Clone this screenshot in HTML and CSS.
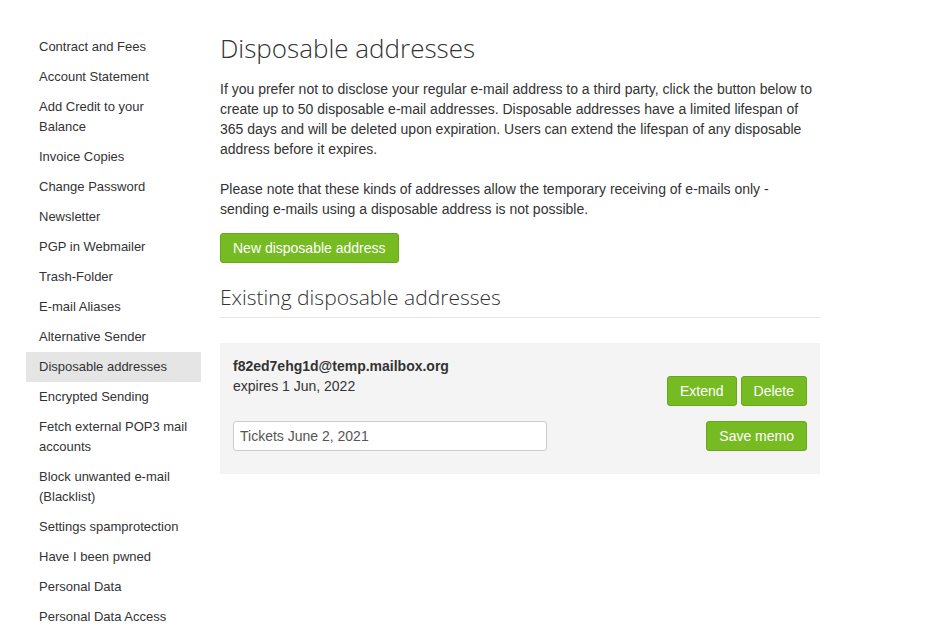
FILE: index.html
```html
<!DOCTYPE html>
<html>
<head>
<meta charset="utf-8">
<link rel="stylesheet" href="styles.css">
</head>
<body>
<div class="page">
  <nav class="sidebar">
    <a class="nav-item">Contract and Fees</a>
    <a class="nav-item">Account Statement</a>
    <a class="nav-item">Add Credit to your Balance</a>
    <a class="nav-item">Invoice Copies</a>
    <a class="nav-item">Change Password</a>
    <a class="nav-item">Newsletter</a>
    <a class="nav-item">PGP in Webmailer</a>
    <a class="nav-item">Trash-Folder</a>
    <a class="nav-item">E-mail Aliases</a>
    <a class="nav-item">Alternative Sender</a>
    <a class="nav-item active">Disposable addresses</a>
    <a class="nav-item">Encrypted Sending</a>
    <a class="nav-item">Fetch external POP3 mail accounts</a>
    <a class="nav-item">Block unwanted e-mail (Blacklist)</a>
    <a class="nav-item">Settings spamprotection</a>
    <a class="nav-item">Have I been pwned</a>
    <a class="nav-item">Personal Data</a>
    <a class="nav-item">Personal Data Access</a>
  </nav>
  <main class="main">
    <h1 class="title">Disposable addresses</h1>
    <p class="intro">If you prefer not to disclose your regular e-mail address to a third party, click the button below to create up to 50 disposable e-mail addresses. Disposable addresses have a limited lifespan of 365 days and will be deleted upon expiration. Users can extend the lifespan of any disposable address before it expires.</p>
    <p class="note">Please note that these kinds of addresses allow the temporary receiving of e-mails only - sending e-mails using a disposable address is not possible.</p>
    <button class="btn">New disposable address</button>
    <h2 class="subtitle">Existing disposable addresses</h2>
    <div class="entry">
      <div class="entry-row">
        <div class="entry-info">
          <div class="entry-address">f82ed7ehg1d@temp.mailbox.org</div>
          <div class="entry-expiry">expires 1 Jun, 2022</div>
        </div>
        <div class="entry-actions">
          <button class="btn">Extend</button>
          <button class="btn">Delete</button>
        </div>
      </div>
      <div class="entry-row memo-row">
        <input class="memo-input" type="text" value="Tickets June 2, 2021">
        <button class="btn">Save memo</button>
      </div>
    </div>
  </main>
</div>
</body>
</html>
```

FILE: styles.css
```css
html, body {
  margin: 0;
  padding: 0;
  background: #fff;
}
body {
  font-family: "Liberation Sans", Arial, sans-serif;
  color: #333;
  font-size: 14px;
  line-height: 20px;
}
.page {
  display: flex;
  align-items: flex-start;
  padding-left: 26px;
  gap: 19px;
}
.sidebar {
  width: 175px;
  flex: none;
  display: flex;
  flex-direction: column;
  padding-top: 32px;
}
.nav-item {
  display: block;
  font-size: 13px;
  line-height: 20px;
  padding: 5px 13px;
  color: #333;
}
.nav-item.active {
  background: #e5e5e5;
}
.main {
  width: 600px;
  flex: none;
  padding-top: 34px;
}
.title {
  font-family: "Open Sans", sans-serif;
  font-weight: 300;
  font-size: 26px;
  line-height: 1.1;
  margin: 0 0 16px;
  color: #333;
}
.intro {
  margin: 0 0 20px;
}
.note {
  margin: 0 0 14px;
}
.btn {
  font-family: "Liberation Sans", Arial, sans-serif;
  font-size: 14px;
  line-height: 18px;
  padding: 5px 12px;
  color: #fff;
  background: #77bb22;
  border: 1px solid #68a61c;
  border-radius: 3px;
  cursor: pointer;
}
.subtitle {
  font-family: "Open Sans", sans-serif;
  font-weight: 300;
  font-size: 21px;
  line-height: 1.1;
  color: #333;
  margin: 23px 0 0;
  padding-bottom: 8px;
  border-bottom: 1px solid #e5e5e5;
}
.entry {
  margin-top: 25px;
  background: #f4f4f4;
  padding: 13px 13px 23px;
}
.entry-row {
  display: flex;
  justify-content: space-between;
  align-items: flex-start;
}
.entry-address {
  font-weight: bold;
}
.entry-actions {
  display: flex;
  gap: 4px;
  padding-top: 20px;
}
.memo-row {
  margin-top: 15px;
  align-items: center;
}
.memo-input {
  width: 314px;
  height: 30px;
  box-sizing: border-box;
  border: 1px solid #ccc;
  border-radius: 3px;
  padding: 4px 6px;
  font-family: "Liberation Sans", Arial, sans-serif;
  font-size: 14px;
  color: #555;
  background: #fff;
}
```
